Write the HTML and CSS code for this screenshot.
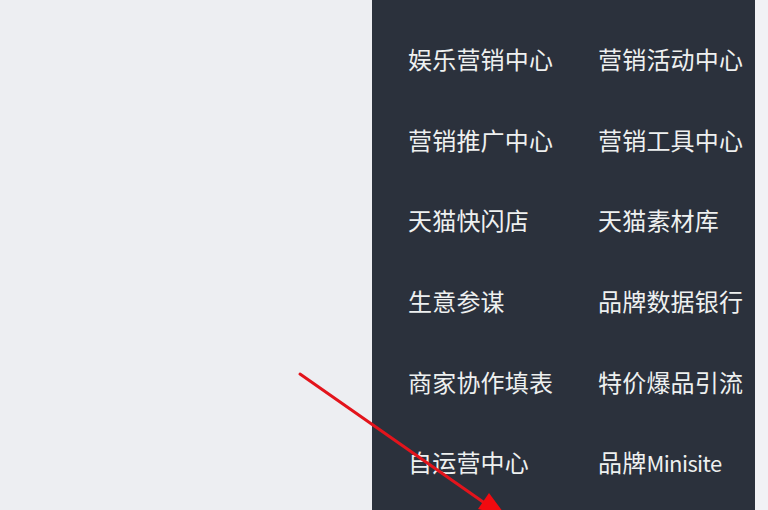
FILE: index.html
```html
<!DOCTYPE html>
<html lang="zh-CN">
<head>
<meta charset="utf-8">
<link rel="stylesheet" href="styles.css">
</head>
<body>
<div class="page">
  <div class="left"></div>
  <div class="panel">
    <div class="menu">
      <span>娱乐营销中心</span><span>营销活动中心</span>
      <span>营销推广中心</span><span>营销工具中心</span>
      <span>天猫快闪店</span><span>天猫素材库</span>
      <span>生意参谋</span><span>品牌数据银行</span>
      <span>商家协作填表</span><span>特价爆品引流</span>
      <span>自运营中心</span><span>品牌<em class="latin">Minisite</em></span>
    </div>
  </div>
  <div class="right"></div>
  <svg class="arrow" width="768" height="510" viewBox="0 0 768 510">
    <line x1="300" y1="374" x2="486" y2="504" stroke="#e3141c" stroke-width="3" stroke-linecap="round"/>
    <polygon points="489,493 478,509 506,516" fill="#f20a0f"/>
  </svg>
</div>
</body>
</html>
```

FILE: styles.css
```css
html, body {
  margin: 0;
  padding: 0;
  background: #edeef2;
}
.page {
  position: relative;
  width: 768px;
  height: 510px;
  display: flex;
  overflow: hidden;
}
.left {
  width: 372px;
  background: #edeef2;
}
.panel {
  width: 383px;
  background: #2b313c;
}
.right {
  width: 13px;
  background: #f1f2f5;
}
.menu {
  display: grid;
  grid-template-columns: 190px auto;
  grid-auto-rows: 80.7px;
  padding: 18px 0 0 36px;
  font-family: "Noto Sans CJK SC", "Noto Sans", sans-serif;
  font-size: 24px;
  color: #eef0f0;
}
.menu span {
  display: flex;
  align-items: center;
  white-space: nowrap;
  letter-spacing: 0.2px;
}
.latin {
  font-style: normal;
  font-size: 22px;
  letter-spacing: -0.6px;
}
.arrow {
  position: absolute;
  left: 0;
  top: 0;
}
```
